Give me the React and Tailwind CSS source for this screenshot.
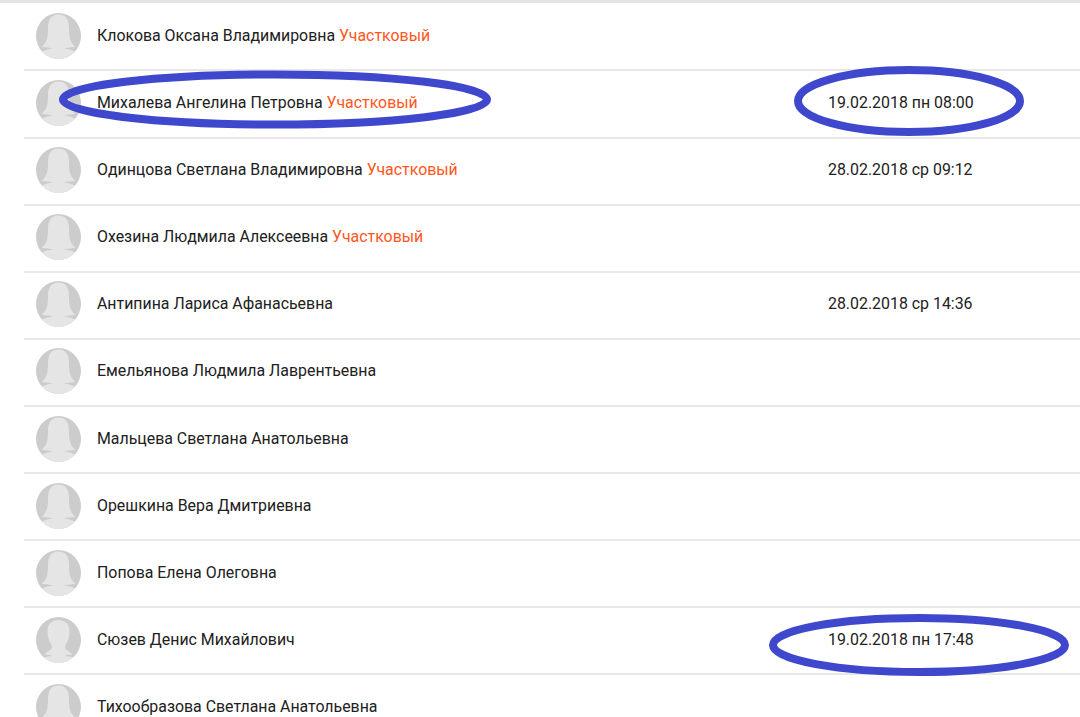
const rows = [
  { name: "Клокова Оксана Владимировна", tag: true },
  { name: "Михалева Ангелина Петровна", tag: true, date: "19.02.2018 пн 08:00" },
  { name: "Одинцова Светлана Владимировна", tag: true, date: "28.02.2018 ср 09:12" },
  { name: "Охезина Людмила Алексеевна", tag: true },
  { name: "Антипина Лариса Афанасьевна", date: "28.02.2018 ср 14:36" },
  { name: "Емельянова Людмила Лаврентьевна" },
  { name: "Мальцева Светлана Анатольевна" },
  { name: "Орешкина Вера Дмитриевна" },
  { name: "Попова Елена Олеговна" },
  { name: "Сюзев Денис Михайлович", date: "19.02.2018 пн 17:48", male: true },
  { name: "Тихообразова Светлана Анатольевна" },
];

function Avatar({ male }) {
  return (
    <svg viewBox="0 0 45 46" className="w-[45px] h-[46px] shrink-0 blur-[0.4px]">
      <defs>
        <clipPath id={male ? "cm" : "cf"}>
          <ellipse cx="22.5" cy="23" rx="22.5" ry="23" />
        </clipPath>
      </defs>
      <ellipse cx="22.5" cy="23" rx="22.5" ry="23" fill="#cccccc" />
      <g clipPath={male ? "url(#cm)" : "url(#cf)"}>
        {male ? (
          <path
            d="M22.500 3C15 3 11.500 8 11.500 14C11.500 20 13.500 25 15.500 28C16.500 30 16 32 13.500 33.500C11.500 35 9.500 36 8.500 38C12 37.500 14 38 16 39C12 39.500 8 40 4 41L4 47L41 47L41 41C37 40 33 39.500 29 39C31 38 33 37.500 36.500 38C35.500 36 33.500 35 31.500 33.500C29 32 28.500 30 29.500 28C31.500 25 33.500 20 33.500 14C33.500 8 30 3 22.500 3Z"
            fill="#e5e5e5"
          />
        ) : (
          <path
            d="M22.500 1.500C14 1.500 12 8 12 15C12 23 11.500 29 5.500 34C10 34.500 14 34.500 17 35.500C13 36 8 37 4 40L4 47L41 47L41 40C37 37 32 36 28 35.500C31 34.500 35 34.500 39.500 34C33.500 29 33 23 33 15C33 8 31 1.500 22.500 1.500Z"
            fill="#e5e5e5"
          />
        )}
      </g>
    </svg>
  );
}

function Row({ r }) {
  return (
    <div className="flex items-center h-[67.1px] border-b-2 border-[#e8e8e8] pb-[2px] pl-3 shrink-0">
      <Avatar male={r.male} />
      <div className="ml-4 w-[731px] shrink-0 text-[15.9px] text-[#212121] whitespace-nowrap">
        {r.name}
        {r.tag && <span className="text-[#ff5722]"> Участковый</span>}
      </div>
      {r.date && <div className="text-[15.9px] text-[#212121] whitespace-nowrap">{r.date}</div>}
    </div>
  );
}

export default function App() {
  return (
    <div className="relative h-[717px] w-[1080px] overflow-hidden bg-white font-['Roboto',sans-serif]">
      <div className="h-[4.4px] bg-[linear-gradient(#e4e4e4_68%,#ffffff_68%)]" />
      <div className="ml-6">
        {rows.map((r) => (
          <Row key={r.name} r={r} />
        ))}
      </div>
      <svg className="absolute inset-0 pointer-events-none" width="1080" height="717" fill="none" stroke="#3f48cc" strokeWidth="8">
        <ellipse cx="275" cy="99.500" rx="212" ry="25" />
        <ellipse cx="909" cy="101" rx="111" ry="31" />
        <ellipse cx="919" cy="645" rx="146" ry="27" />
      </svg>
    </div>
  );
}
